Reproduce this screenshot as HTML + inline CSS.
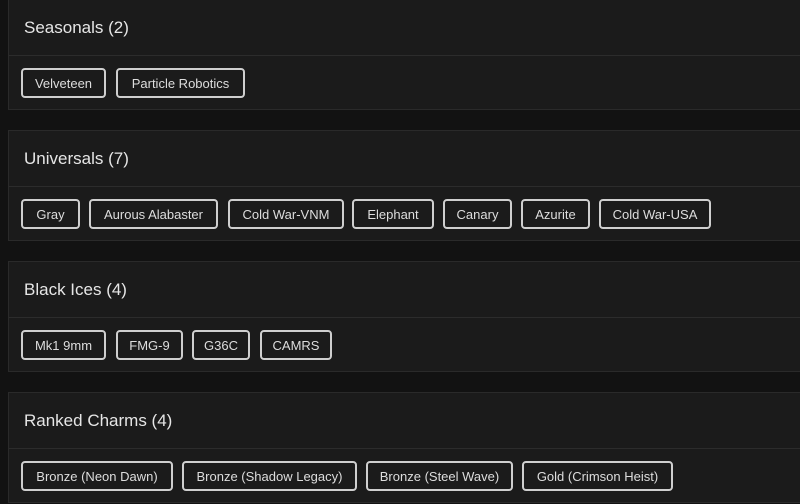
<!DOCTYPE html><html><head><style>
body{margin:0;width:800px;height:504px;background:#121212;overflow:hidden;font-family:"Liberation Sans",sans-serif;position:relative}
.card{position:absolute;left:8px;width:800px;height:109px;background:#1b1b1b;border:1px solid #2a2a2a}
.h{position:absolute;left:15px;top:18px;font-size:17px;color:#e6e6e6}
.line{position:absolute;left:0;right:0;top:55px;border-top:1px solid #2c2c2c}
.c{position:absolute;top:68px;height:26px;border:2px solid #cfcfcf;border-radius:4px;color:#ddd;font-size:13px;line-height:27px;text-align:center;box-sizing:content-box}
</style></head><body>
<div class="card" style="top:-1px"><div class="h">Seasonals (2)</div><div class="line"></div>
<div class="c" style="left:12px;width:81px">Velveteen</div><div class="c" style="left:107px;width:125px">Particle Robotics</div></div>
<div class="card" style="top:130px"><div class="h">Universals (7)</div><div class="line"></div>
<div class="c" style="left:12px;width:55px">Gray</div><div class="c" style="left:80px;width:125px">Aurous Alabaster</div><div class="c" style="left:219px;width:112px">Cold War-VNM</div><div class="c" style="left:343px;width:78px">Elephant</div><div class="c" style="left:434px;width:65px">Canary</div><div class="c" style="left:512px;width:65px">Azurite</div><div class="c" style="left:590px;width:108px">Cold War-USA</div></div>
<div class="card" style="top:261px"><div class="h">Black Ices (4)</div><div class="line"></div>
<div class="c" style="left:12px;width:81px">Mk1 9mm</div><div class="c" style="left:107px;width:63px">FMG-9</div><div class="c" style="left:183px;width:54px">G36C</div><div class="c" style="left:251px;width:68px">CAMRS</div></div>
<div class="card" style="top:392px"><div class="h">Ranked Charms (4)</div><div class="line"></div>
<div class="c" style="left:12px;width:148px">Bronze (Neon Dawn)</div><div class="c" style="left:173px;width:171px">Bronze (Shadow Legacy)</div><div class="c" style="left:357px;width:143px">Bronze (Steel Wave)</div><div class="c" style="left:513px;width:147px">Gold (Crimson Heist)</div></div>
</body></html>
